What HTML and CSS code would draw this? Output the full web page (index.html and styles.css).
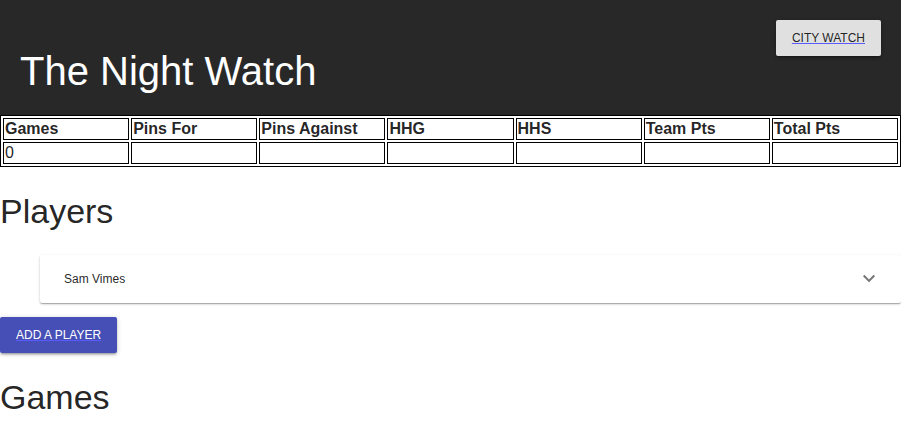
FILE: index.html
```html
<!DOCTYPE html>
<html lang="en">
<head>
<meta charset="utf-8">
<title>The Night Watch</title>
<link rel="stylesheet" href="styles.css">
</head>
<body>
<header class="hero">
  <a class="button button-default" href="#league">City Watch</a>
  <h1 class="hero-title">The Night Watch</h1>
</header>
<main>
  <table class="stats">
    <thead>
      <tr><th>Games</th><th>Pins For</th><th>Pins Against</th><th>HHG</th><th>HHS</th><th>Team Pts</th><th>Total Pts</th></tr>
    </thead>
    <tbody>
      <tr><td>0</td><td></td><td></td><td></td><td></td><td></td><td></td></tr>
    </tbody>
  </table>
  <h2 class="section-title">Players</h2>
  <ul class="players">
    <li>
      <button class="panel" type="button" aria-expanded="false">
        <span>Sam Vimes</span>
        <svg class="chevron" viewBox="0 0 24 24" aria-hidden="true"><path d="M7.41 7.84L12 12.42l4.59-4.58L18 9.25l-6 6-6-6z"/></svg>
      </button>
    </li>
  </ul>
  <a class="button button-primary" href="#add">Add a Player</a>
  <h2 class="section-title">Games</h2>
</main>
</body>
</html>
```

FILE: styles.css
```css
* {
  box-sizing: border-box;
}

body {
  margin: 0;
  background: #fff;
  color: rgba(0, 0, 0, 0.87);
  font-family: "Liberation Sans", Arial, sans-serif;
  font-size: 16px;
}

.hero {
  display: flex;
  flex-direction: column;
  padding: 20px;
  background: #282828;
  color: #fff;
}

.hero .button {
  align-self: flex-end;
}

.hero-title {
  margin: -8px 0 0;
  font-size: 40px;
  font-weight: 400;
  line-height: 47px;
}

.button {
  display: inline-block;
  min-width: 88px;
  padding: 8px 16px;
  border-radius: 2px;
  box-shadow: 0 1px 5px rgba(0, 0, 0, 0.2), 0 2px 2px rgba(0, 0, 0, 0.14), 0 3px 1px -2px rgba(0, 0, 0, 0.12);
  font-size: 12px;
  line-height: 20px;
  text-align: center;
  text-transform: uppercase;
  text-decoration: underline #5a5aff;
}

.button-default {
  background: #e0e0e0;
  color: rgba(0, 0, 0, 0.87);
}

.button-primary {
  background: #454fb5;
  color: #fff;
}

.stats {
  width: 100%;
  table-layout: fixed;
  border: 1px solid #000;
  border-spacing: 2px;
}

.stats th,
.stats td {
  height: 22px;
  padding: 1px;
  border: 1px solid #000;
  line-height: 18px;
  text-align: left;
}

.section-title {
  margin: 24px 0;
  font-size: 34px;
  font-weight: 400;
  line-height: 40px;
}

.players {
  margin: 0 0 14px;
  padding: 0 0 0 40px;
  list-style: none;
}

.panel {
  display: flex;
  align-items: center;
  justify-content: space-between;
  width: 100%;
  min-height: 48px;
  padding: 0 20px 0 24px;
  border: 0;
  border-radius: 2px;
  background: #fff;
  box-shadow: 0 1px 3px rgba(0, 0, 0, 0.2), 0 1px 1px rgba(0, 0, 0, 0.14), 0 2px 1px -1px rgba(0, 0, 0, 0.12);
  color: inherit;
  font: inherit;
  font-size: 12px;
}

.chevron {
  width: 24px;
  height: 24px;
  fill: rgba(0, 0, 0, 0.54);
}
```
